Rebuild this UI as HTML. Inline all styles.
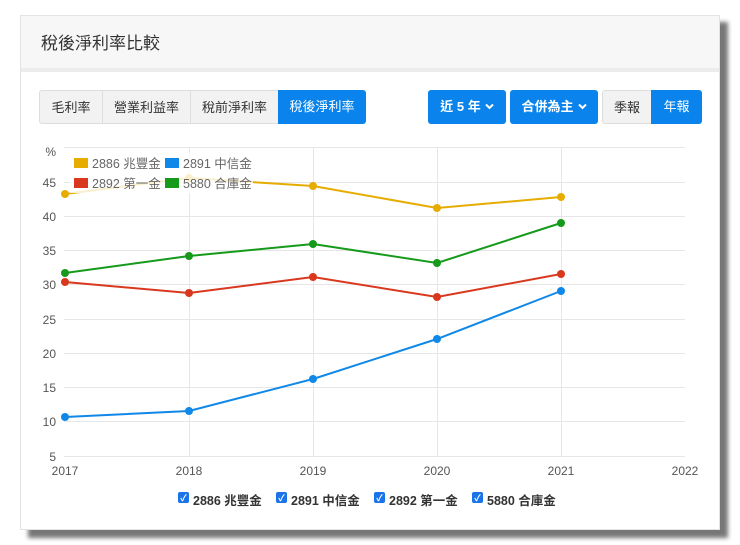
<!DOCTYPE html>
<html><head><meta charset="utf-8"><style>
body{margin:0;width:740px;height:545px;background:#fff;font-family:"Liberation Sans","Noto Sans CJK TC",sans-serif;position:relative;overflow:hidden}
.shadow{position:absolute;left:28px;top:22px;width:700px;height:516px;background:#777;filter:blur(2px)}
.card{position:absolute;left:20px;top:15px;width:700px;height:515px;background:#fff;border:1px solid #e3e3e3;box-sizing:border-box}
.hdr{height:52px;background:#f7f7f7;border-bottom:4px solid #ececec;font-size:17px;color:#333;line-height:56px;padding-left:20px}
.btn{position:absolute;top:90px;height:34px;line-height:34px;font-size:13px;text-align:center;box-sizing:border-box}
.g{background:#f2f2f2;color:#333;border:1px solid #ddd}
.b{background:#0a84ec;color:#fff;border-radius:3px;font-weight:bold}
.b svg{vertical-align:middle;margin-left:4px;margin-top:-2px}
</style></head><body>
<div class="shadow"></div>
<div class="card"><div class="hdr">稅後淨利率比較</div></div>
<div class="btn g" style="left:39px;width:64px;border-radius:3px 0 0 3px">毛利率</div>
<div class="btn g" style="left:102px;width:89px">營業利益率</div>
<div class="btn g" style="left:190px;width:89px">稅前淨利率</div>
<div class="btn b" style="left:278px;width:88px;border-radius:0 3px 3px 0;font-weight:normal">稅後淨利率</div>
<div class="btn b" style="left:428px;width:78px">近 5 年<svg width="9" height="7" viewBox="0 0 9 7"><path d="M1 1.5L4.5 5 8 1.5" stroke="#fff" stroke-width="2" fill="none"/></svg></div>
<div class="btn b" style="left:510px;width:88px">合併為主<svg width="9" height="7" viewBox="0 0 9 7"><path d="M1 1.5L4.5 5 8 1.5" stroke="#fff" stroke-width="2" fill="none"/></svg></div>
<div class="btn g" style="left:602px;width:50px;border-radius:3px 0 0 3px">季報</div>
<div class="btn b" style="left:651px;width:51px;border-radius:0 3px 3px 0;font-weight:normal">年報</div>
<svg style="position:absolute;left:0;top:0" width="740" height="545" font-family="Liberation Sans,Noto Sans CJK TC,sans-serif" font-size="12" fill="#555">
<g stroke="#e6e6e6" stroke-width="1">
<line x1="64" x2="685" y1="147.5" y2="147.5"/><line x1="64" x2="685" y1="182.5" y2="182.5"/><line x1="64" x2="685" y1="216.5" y2="216.5"/><line x1="64" x2="685" y1="250.5" y2="250.5"/><line x1="64" x2="685" y1="284.5" y2="284.5"/><line x1="64" x2="685" y1="319.5" y2="319.5"/><line x1="64" x2="685" y1="353.5" y2="353.5"/><line x1="64" x2="685" y1="387.5" y2="387.5"/><line x1="64" x2="685" y1="421.5" y2="421.5"/><line x1="64" x2="685" y1="456.5" y2="456.5"/>
<line x1="189.5" x2="189.5" y1="147" y2="456"/><line x1="313.5" x2="313.5" y1="147" y2="456"/><line x1="437.5" x2="437.5" y1="147" y2="456"/><line x1="561.5" x2="561.5" y1="147" y2="456"/>
</g>
<g text-anchor="end"><text x="56" y="156">%</text><text x="56" y="187">45</text><text x="56" y="221">40</text><text x="56" y="255">35</text><text x="56" y="289">30</text><text x="56" y="324">25</text><text x="56" y="358">20</text><text x="56" y="392">15</text><text x="56" y="426">10</text><text x="56" y="461">5</text></g>
<g text-anchor="middle"><text x="65" y="475">2017</text><text x="189" y="475">2018</text><text x="313" y="475">2019</text><text x="437" y="475">2020</text><text x="561" y="475">2021</text><text x="685" y="475">2022</text></g>
<g fill="none" stroke-width="2">
<polyline stroke="#e6ad00" points="65,194 189,178 313,186 437,208 561,197"/>
<polyline stroke="#159a1b" points="65,273 189,256 313,244 437,263 561,223"/>
<polyline stroke="#d9381e" points="65,282 189,293 313,277 437,297 561,274"/>
<polyline stroke="#1088e8" points="65,417 189,411 313,379 437,339 561,291"/>
</g>
<g fill="#e6ad00"><circle cx="65" cy="194" r="4"/><circle cx="189" cy="178" r="4"/><circle cx="313" cy="186" r="4"/><circle cx="437" cy="208" r="4"/><circle cx="561" cy="197" r="4"/></g>
<g fill="#159a1b"><circle cx="65" cy="273" r="4"/><circle cx="189" cy="256" r="4"/><circle cx="313" cy="244" r="4"/><circle cx="437" cy="263" r="4"/><circle cx="561" cy="223" r="4"/></g>
<g fill="#d9381e"><circle cx="65" cy="282" r="4"/><circle cx="189" cy="293" r="4"/><circle cx="313" cy="277" r="4"/><circle cx="437" cy="297" r="4"/><circle cx="561" cy="274" r="4"/></g>
<g fill="#1088e8"><circle cx="65" cy="417" r="4"/><circle cx="189" cy="411" r="4"/><circle cx="313" cy="379" r="4"/><circle cx="437" cy="339" r="4"/><circle cx="561" cy="291" r="4"/></g>
<rect x="70" y="153" width="183" height="40" fill="#fff" opacity="0.8"/>
<g font-size="12.5">
<rect x="74" y="158" width="14" height="10" fill="#e6ad00"/><text x="92" y="168" fill="#666">2886 兆豐金</text>
<rect x="165" y="158" width="14" height="10" fill="#1088e8"/><text x="183" y="168" fill="#666">2891 中信金</text>
<rect x="74" y="178" width="14" height="10" fill="#d9381e"/><text x="92" y="188" fill="#666">2892 第一金</text>
<rect x="165" y="178" width="14" height="10" fill="#159a1b"/><text x="183" y="188" fill="#666">5880 合庫金</text>
</g>
<g font-weight="bold" font-size="12.5" fill="#333">
<rect x="178" y="492" width="11" height="11" rx="2" fill="#1a73e8"/><text x="183.5" y="501" fill="#fff" font-size="9" text-anchor="middle">✓</text><text x="193" y="505">2886 兆豐金</text>
<rect x="276" y="492" width="11" height="11" rx="2" fill="#1a73e8"/><text x="281.5" y="501" fill="#fff" font-size="9" text-anchor="middle">✓</text><text x="291" y="505">2891 中信金</text>
<rect x="374" y="492" width="11" height="11" rx="2" fill="#1a73e8"/><text x="379.5" y="501" fill="#fff" font-size="9" text-anchor="middle">✓</text><text x="389" y="505">2892 第一金</text>
<rect x="472" y="492" width="11" height="11" rx="2" fill="#1a73e8"/><text x="477.5" y="501" fill="#fff" font-size="9" text-anchor="middle">✓</text><text x="487" y="505">5880 合庫金</text>
</g>
</svg>
</body></html>
